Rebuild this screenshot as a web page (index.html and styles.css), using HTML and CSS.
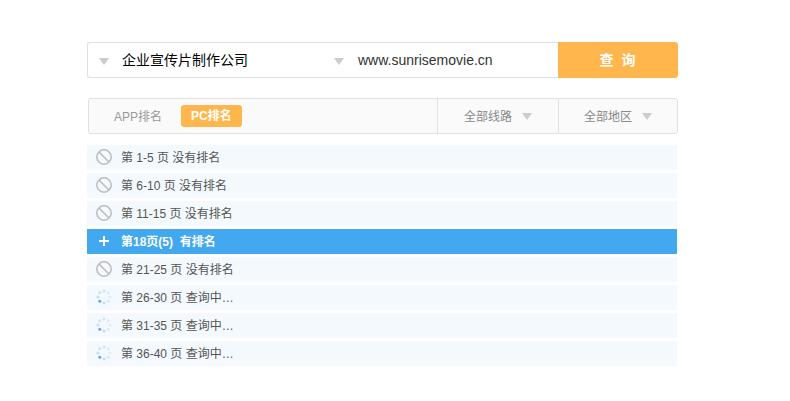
FILE: index.html
```html
<!DOCTYPE html>
<html lang="zh">
<head>
<meta charset="utf-8">
<title>排名查询</title>
<link rel="stylesheet" href="styles.css">
</head>
<body>
<main class="page">
  <form class="search">
    <div class="kw"><i class="tri"></i><span class="kw-text">企业宣传片制作公司</span><i class="tri"></i></div>
    <div class="site">www.sunrisemovie.cn</div>
    <div class="go">查 询</div>
  </form>
  <div class="filters">
    <div class="tabs"><span class="tab">APP排名</span><span class="tab on">PC排名</span></div>
    <div class="sel sel-a">全部线路<i class="tri"></i></div>
    <div class="sel sel-b">全部地区<i class="tri"></i></div>
  </div>
  <ul class="rows">
    <li class="row"><svg class="ic" viewBox="0 0 16 16"><circle cx="8" cy="8" r="7.2"/><path d="M3 3l10 10"/></svg>第 1-5 页 没有排名</li>
    <li class="row"><svg class="ic" viewBox="0 0 16 16"><circle cx="8" cy="8" r="7.2"/><path d="M3 3l10 10"/></svg>第 6-10 页 没有排名</li>
    <li class="row"><svg class="ic" viewBox="0 0 16 16"><circle cx="8" cy="8" r="7.2"/><path d="M3 3l10 10"/></svg>第 11-15 页 没有排名</li>
    <li class="row hit"><svg class="ic plus" viewBox="0 0 16 16"><path d="M8 3v10M3 8h10"/></svg>第18页(5)&nbsp; 有排名</li>
    <li class="row"><svg class="ic" viewBox="0 0 16 16"><circle cx="8" cy="8" r="7.2"/><path d="M3 3l10 10"/></svg>第 21-25 页 没有排名</li>
    <li class="row"><svg class="ic spin" viewBox="0 0 16 16"><circle cx="8" cy="2" r="1.5" opacity=".18"/><circle cx="12.2" cy="3.8" r="1.5" opacity=".12"/><circle cx="14" cy="8" r="1.5" opacity=".1"/><circle cx="12.2" cy="12.2" r="1.5" opacity=".12"/><circle cx="8" cy="14" r="1.5" opacity=".25"/><circle cx="3.8" cy="12.2" r="1.5" opacity=".75"/><circle cx="2" cy="8" r="1.5" opacity=".25"/><circle cx="3.8" cy="3.8" r="1.5" opacity=".2"/></svg>第 26-30 页 查询中…</li>
    <li class="row"><svg class="ic spin" viewBox="0 0 16 16"><circle cx="8" cy="2" r="1.5" opacity=".18"/><circle cx="12.2" cy="3.8" r="1.5" opacity=".12"/><circle cx="14" cy="8" r="1.5" opacity=".1"/><circle cx="12.2" cy="12.2" r="1.5" opacity=".12"/><circle cx="8" cy="14" r="1.5" opacity=".25"/><circle cx="3.8" cy="12.2" r="1.5" opacity=".75"/><circle cx="2" cy="8" r="1.5" opacity=".25"/><circle cx="3.8" cy="3.8" r="1.5" opacity=".2"/></svg>第 31-35 页 查询中…</li>
    <li class="row"><svg class="ic spin" viewBox="0 0 16 16"><circle cx="8" cy="2" r="1.5" opacity=".18"/><circle cx="12.2" cy="3.8" r="1.5" opacity=".12"/><circle cx="14" cy="8" r="1.5" opacity=".1"/><circle cx="12.2" cy="12.2" r="1.5" opacity=".12"/><circle cx="8" cy="14" r="1.5" opacity=".25"/><circle cx="3.8" cy="12.2" r="1.5" opacity=".75"/><circle cx="2" cy="8" r="1.5" opacity=".25"/><circle cx="3.8" cy="3.8" r="1.5" opacity=".2"/></svg>第 36-40 页 查询中…</li>
  </ul>
</main>
</body>
</html>
```
FILE: styles.css
```css
* { box-sizing: border-box; }
html, body { margin: 0; background: #fff; }
body { font-family: "Liberation Sans", "Noto Sans CJK SC", sans-serif; }
.page { width: 591px; margin-left: 87px; padding-top: 42px; }
.tri { display: block; width: 0; height: 0; margin-top: 3px; border-left: 5px solid transparent; border-right: 5px solid transparent; border-top: 7px solid #ccc; }
.search { display: flex; height: 36px; }
.kw { width: 266px; display: flex; align-items: center; padding-left: 11px; border: 1px solid #e1e1e1; border-right: 0; border-radius: 3px 0 0 3px; }
.kw-text { width: 225px; padding-left: 13px; padding-bottom: 2px; font-size: 14px; color: #000; }
.site { flex: 1; display: flex; align-items: center; padding-left: 5px; border: 1px solid #e1e1e1; border-width: 1px 0; font-size: 14px; color: #333; }
.go { width: 120px; display: flex; align-items: center; justify-content: center; padding-bottom: 2px; background: #ffb74d; color: #fff; font-size: 14px; font-weight: bold; letter-spacing: 1px; word-spacing: 2px; border-radius: 0 3px 3px 0; }
.filters { display: flex; height: 36px; margin: 20px 0 0 1px; border: 1px solid #e1e1e1; border-radius: 3px; background: #fafafa; font-size: 12px; color: #999; }
.tabs { flex: 1; display: flex; align-items: center; padding-left: 25px; gap: 19px; }
.tab { padding-bottom: 2px; }
.tab.on { height: 22px; line-height: 21px; padding: 1px 10px 0; background: #ffb74d; color: #fff; font-weight: bold; border-radius: 3px; }
.sel { display: flex; align-items: center; gap: 10px; padding-bottom: 2px; border-left: 1px solid #e1e1e1; color: #888; }
.sel-a { width: 121px; padding-left: 26px; }
.sel-b { width: 119px; padding-left: 25px; }
.rows { list-style: none; margin: 11px 0 0; padding: 0; width: 590px; }
.row { display: flex; align-items: center; height: 25px; margin-bottom: 3px; padding: 0 0 2px 9px; background: #f4f9fe; font-size: 12px; color: #555; }
.row.hit { background: #42a8f0; color: #fff; font-weight: bold; }
.ic { width: 16px; height: 16px; margin-right: 9px; flex: none; fill: none; stroke: #bbb; stroke-width: 1.5; }
.ic.plus { stroke: #fff; stroke-width: 2; }
.ic.spin { fill: #3f86e0; stroke: none; }
```
